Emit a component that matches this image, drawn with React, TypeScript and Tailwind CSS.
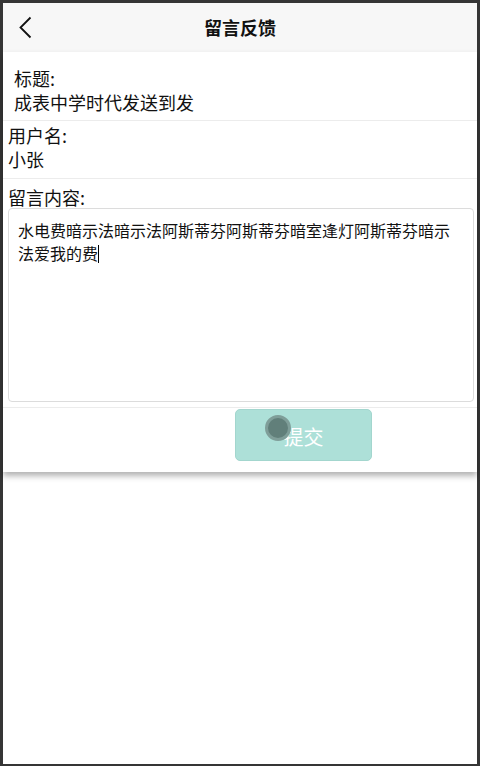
import React from "react";

export default function App() {
  const font = { fontFamily: '"Microsoft YaHei","Noto Sans CJK SC","Noto Sans",sans-serif' };
  return (
    <div className="w-[480px] h-[766px] bg-[#353535] pt-[3px] px-[3px] pb-[2px]" style={font}>
      <div className="w-full h-full bg-white flex flex-col">
        <div className="h-[49px] bg-[#f7f7f7] relative flex items-center justify-center shrink-0">
          <svg className="absolute left-[14px] top-[12px]" width="20" height="26" viewBox="0 0 20 26">
            <path d="M13.5 2.5 L3.5 12.5 L13.5 22.5" fill="none" stroke="#111" strokeWidth="1.8" />
          </svg>
          <span className="text-[18px] font-bold text-[#111] leading-[24px] -mt-[2px]">留言反馈</span>
        </div>
        <div className="shadow-[0_4px_6px_rgba(0,0,0,0.3)] relative z-10">
          <div className="pt-[14px] pb-[6px] pl-[11px] border-b border-[#ececec]">
            <div className="text-[18px] leading-[24px] text-[#111]">标题:</div>
            <div className="text-[18px] leading-[24px] text-[#111]">成表中学时代发送到发</div>
          </div>
          <div className="pt-[2px] pb-[7px] pl-[5px] border-b border-[#ececec]">
            <div className="text-[18px] leading-[24px] text-[#111]">用户名:</div>
            <div className="text-[18px] leading-[24px] text-[#111]">小张</div>
          </div>
          <div className="pt-[7px] pb-[5px] pl-[5px] pr-[3px] border-b border-[#ececec]">
            <div className="text-[18px] leading-[22px] text-[#111]">留言内容:</div>
            <div className="h-[194px] border border-[#dcdcdc] rounded-[4px] pt-[10px] px-[9px] text-[16px] leading-[23px] text-[#111]">
              水电费暗示法暗示法阿斯蒂芬阿斯蒂芬暗室逢灯阿斯蒂芬暗示法爱我的费
              <span className="inline-block w-px h-[18px] bg-black align-[-3px]"></span>
            </div>
          </div>
          <div className="pt-px pb-[11px]">
            <div className="ml-[232px] w-[137px] h-[52px] rounded-[5px] bg-[#ade0d8] border border-[#a3d6ce] relative flex items-center justify-center">
              <span className="text-[20px] text-white leading-[24px] mt-[3px]">提交</span>
              <div className="absolute left-[29px] top-[5px] w-[26px] h-[26px] rounded-full bg-[#617f7a] border-[3px] border-[#7f9e99]"></div>
            </div>
          </div>
        </div>
        <div className="flex-1 bg-white"></div>
      </div>
    </div>
  );
}
